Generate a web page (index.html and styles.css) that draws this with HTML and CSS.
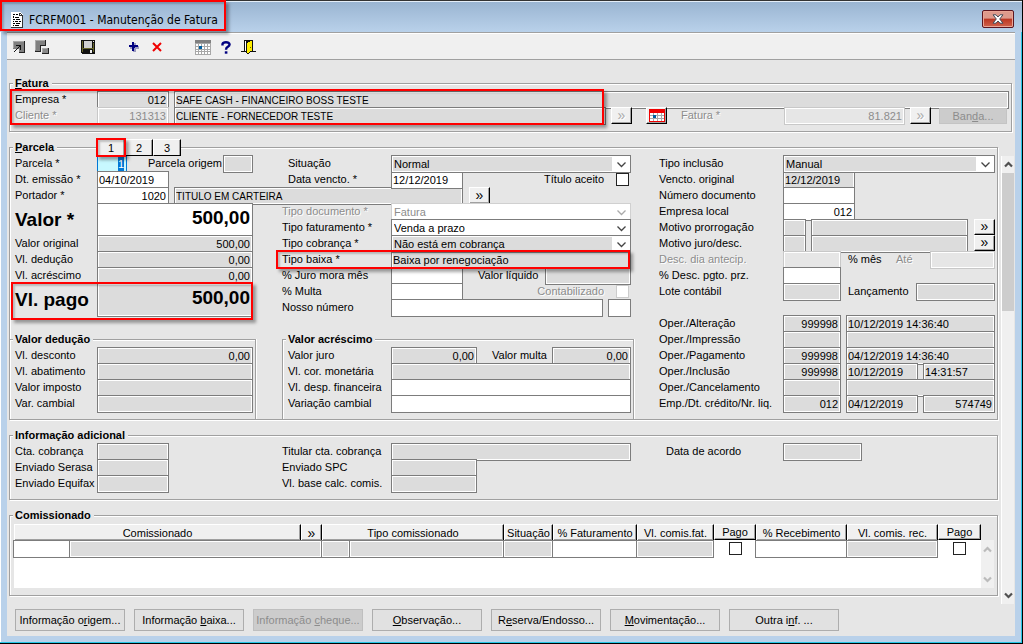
FILE: index.html
```html
<!DOCTYPE html>
<html lang="pt-BR">
<head>
<meta charset="utf-8">
<title>FCRFM001 - Manutenção de Fatura</title>
<link rel="stylesheet" href="styles.css">
</head>
<body>
<svg class="defs" aria-hidden="true">
  <symbol id="down" viewBox="0 0 9 6"><path d="M.5 .5 4.500 4.500 8.500 .5" fill="none" stroke="currentColor" stroke-width="1.300"/></symbol>
  <symbol id="thick" viewBox="0 0 9 7"><path d="M1 1.500 4.500 5 8 1.500" fill="none" stroke="currentColor" stroke-width="2.200"/></symbol>
</svg>
<div class="window">
  <header class="titlebar">
    <svg class="doc" viewBox="0 0 12 16" shape-rendering="crispEdges"><path d="M0 0h9l3 3v13H0z" fill="#fff"/><path d="M11 3h1v13h-1zM0 15h12v1H0zM9 1h1v1H9zM10 2h1v1h-1zM8 1h1v3H8zM8 3h3v1H8z" fill="#333"/><path d="M2 2h2v1H2zM5 2h2v1H5zM2 4h1v2H2zM4 5h4v1H4zM2 7h2v1H2zM5 7h4v1H5zM2 9h1v1H2zM4 9h3v1H4zM8 9h2v1H8zM2 11h2v1H2zM5 11h4v1H5zM2 13h1v1H2zM4 13h4v1H4z" fill="#000"/></svg>
    <h1>FCRFM001 - Manutenção de Fatura</h1>
    <button class="close" type="button" aria-label="Fechar"><svg viewBox="0 0 12 10"><path d="M1 .8h3l2 2.200 2-2.200h3L7.700 5 11 9.200H8L6 7 4 9.200H1L4.300 5z" fill="#fff" stroke="#444b58"/></svg></button>
    <span class="mark mark-title"></span>
  </header>
  <div class="body">
    <nav class="toolbar" aria-label="Ferramentas">
      <button type="button" aria-label="Confirmar"><svg width="12" height="12" viewBox="0 0 12 12" shape-rendering="crispEdges"><path d="M0 0h11v11H6V8H0z" fill="#808080"/><path d="M0 0h11v1H1v6H0z" fill="#a8a8a8"/><path d="M11 0h1v12H6v-1h5z" fill="#222"/><path d="M3 4h5v5H7V6H6v1H5v1H4v1H3v1H2v1H1v-1h1V9h1V8h1V7h1V6h1V5H3z" fill="#111"/></svg></button>
      <button type="button" aria-label="Navegar"><svg width="14" height="14" viewBox="0 0 14 14" shape-rendering="crispEdges"><path d="M0 0h10v5H5v6H0z" fill="#808080"/><path d="M10 0h1v6H6v6H0v-1h5V5h5zM13 8h1v6H7v-1h6z" fill="#222"/><path d="M7 8h6v5H7z" fill="#888"/><path d="M0 0h10v1H1v9H0zM7 8h5v1H8v3H7z" fill="#aaa"/></svg></button>
      <span></span>
      <button type="button" aria-label="Salvar"><svg width="14" height="14" viewBox="0 0 14 14" shape-rendering="crispEdges"><path d="M0 0h14v14H1L0 13z" fill="#111"/><path d="M1 1h1v11H1zM12 3h1v9h-1z" fill="#66662a"/><path d="M3 1h8v7H3z" fill="#d0d0d0"/><path d="M12 1h1v1h-1zM9 10h2v3H9z" fill="#eee"/><path d="M2 8h10v1H2z" fill="#66662a"/></svg></button>
      <span></span>
      <button type="button" aria-label="Incluir"><svg width="10" height="10" viewBox="0 0 10 10" shape-rendering="crispEdges"><path d="M4 1h3v3h3v3H7v3H4V7H1V4h3z" fill="#9c9cc0"/><path d="M3 0h2v3h4v2H5v4H3V5H0V3h3z" fill="#000080"/><path d="M3 3h3v3H3z" fill="#000080"/></svg></button>
      <button type="button" aria-label="Excluir"><svg width="10" height="10" viewBox="0 0 10 10"><path d="M1 1 9 9M9 1 1 9" stroke="#f00000" stroke-width="2"/></svg></button>
      <span></span>
      <button type="button" aria-label="Calendário"><svg width="16" height="15" viewBox="0 0 16 15" shape-rendering="crispEdges"><path d="M0 0h16v15H0z" fill="#a8a8a8"/><path d="M0 0h16v3H0z" fill="#808080"/><path d="M1 4h2v2H1zM4 4h2v2H4zM7 4h2v2H7zM10 4h2v2h-2zM13 4h2v2h-2zM1 7h2v2H1zM4 7h2v2H4zM7 7h2v2H7zM10 7h2v2h-2zM13 7h2v2h-2zM1 10h2v1H1zM4 10h2v1H4zM7 10h2v1H7zM10 10h2v1h-2zM13 10h2v1h-2zM1 12h2v2H1zM4 12h2v2H4zM7 12h2v2H7zM10 12h2v2h-2zM13 12h2v2h-2z" fill="#fff"/><path d="M4 6h3v3H4z" fill="#0060a0"/></svg></button>
      <button type="button" aria-label="Ajuda"><svg width="10" height="13" viewBox="0 0 10 13"><path d="M1.500 4.500V3Q2 1.200 5 1.200T8.600 3.300Q8.600 4.800 7 5.600 5 6.500 5 8.700" fill="none" stroke="#000080" stroke-width="2.400"/><path d="M3.800 10.300h2.600v2.400H3.800z" fill="#000080"/></svg></button>
      <button type="button" aria-label="Sair"><svg width="15" height="14" viewBox="0 0 15 14" shape-rendering="crispEdges"><path d="M3 0h9v11h3v1H9v1H8v1H6v-1H5v-1H0v-1h3z" fill="#111"/><path d="M4 1h1v10H4z" fill="#fff"/><path d="M6 3h1V2h2V1h2v10H9v1H8v1H6z" fill="#ffee00"/><path d="M9 7h1v1H9z" fill="#666600"/></svg></button>
    </nav>

    <main class="content">
      <div class="box header-box">
        <fieldset>
          <legend><u>F</u>atura</legend>
          <div class="rows lead">
            <div class="row"><label class="l1" for="empresa">Empresa *</label><input id="empresa" class="f w72 num ro" readonly value="012"><input class="f grow ro next caps" readonly aria-label="Nome da empresa" value="SAFE CASH - FINANCEIRO BOSS TESTE"></div>
            <div class="row"><label class="l1 off" for="cliente">Cliente *</label><input id="cliente" class="f w72 num off-f" disabled value="131313"><input class="f grow ro next caps" readonly aria-label="Nome do cliente" value="CLIENTE - FORNECEDOR TESTE"><button class="go next" type="button" disabled aria-label="Buscar cliente">»</button><button class="go cal" type="button" aria-label="Calendário da fatura"><svg width="16" height="13" viewBox="0 0 16 13" shape-rendering="crispEdges"><path d="M0 0h16v13H0z" fill="#f00000"/><path d="M1 4h14v8H1z" fill="#fff"/><path d="M4 4h1v8H4zM8 4h1v8H8zM12 4h1v8h-1zM1 6h14v1H1zM1 9h14v1H1z" fill="#a8a8a8"/><path d="M4 6h3v3H4z" fill="#0060a0"/></svg></button><label class="fat-label off" for="fatura">Fatura *</label><input id="fatura" class="f w121 num off-f" disabled value="81.821"><button class="go next" type="button" disabled aria-label="Buscar fatura">»</button><button class="banda" type="button" disabled>Ban<u>d</u>a...</button></div>
          </div>
        </fieldset>
        <span class="mark mark-empresa"></span>
      </div>

      <div class="scroller">
        <div class="panes">
          <div class="box">
            <fieldset>
              <legend><u>P</u>arcela</legend>
              <div class="cols">
                <div class="rows">
                  <div class="lead">
                    <div class="row"><label class="l1" for="parcela">Parcela *</label><input id="parcela" class="f w30 num current" value="1"><label class="origem" for="origem">Parcela origem</label><input id="origem" class="f w30 ro" readonly></div>
                    <div class="row"><label class="l1" for="emissao">Dt. emissão *</label><input id="emissao" class="f w72" value="04/10/2019"></div>
                    <div class="row"><label class="l1" for="portador">Portador *</label><input id="portador" class="f w72 num" value="1020"><input class="f w289 ro next caps" readonly aria-label="Nome do portador" value="TITULO EM CARTEIRA"></div>
                    <div class="row big"><label class="l1" for="valor">Valor *</label><input id="valor" class="f w156 num" value="500,00"></div>
                    <div class="row"><label class="l1" for="vorig">Valor original</label><input id="vorig" class="f w156 num ro" readonly value="500,00"></div>
                    <div class="row"><label class="l1" for="vded">Vl. dedução</label><input id="vded" class="f w156 num ro" readonly value="0,00"></div>
                    <div class="row"><label class="l1" for="vacr">Vl. acréscimo</label><input id="vacr" class="f w156 num ro" readonly value="0,00"></div>
                    <div class="row big"><label class="l1" for="vpago">Vl. pago</label><input id="vpago" class="f w156 num ro" readonly value="500,00"></div>
                  </div>
                  <fieldset class="sub sub-a">
                    <legend>Valor dedução</legend>
                    <div class="lead">
                      <div class="row"><label class="l1" for="vdesc">Vl. desconto</label><input id="vdesc" class="f w156 num ro" readonly value="0,00"></div>
                      <div class="row"><label class="l1" for="vabat">Vl. abatimento</label><input id="vabat" class="f w156 ro" readonly></div>
                      <div class="row"><label class="l1" for="vimp">Valor imposto</label><input id="vimp" class="f w156 ro" readonly></div>
                      <div class="row"><label class="l1" for="vcamb">Var. cambial</label><input id="vcamb" class="f w156 ro" readonly></div>
                    </div>
                  </fieldset>
                </div>

                <div class="rows">
                  <div class="row"><label class="l2 ind" for="situacao">Situação</label><span class="combo ro-c"><select id="situacao"><option>Normal</option></select><svg><use href="#down"/></svg></span></div>
                  <div class="row mid"><label class="l2 ind" for="vencto">Data vencto. *</label><input id="vencto" class="f w72" value="12/12/2019"><label class="tick"><span>Título aceito</span><input type="checkbox"></label></div>
                  <div class="row"><button class="go portador-go" type="button" aria-label="Buscar portador">»</button></div>
                  <div class="row"><label class="l2 off" for="tdoc">Tipo documento *</label><span class="combo off-c"><select id="tdoc" disabled><option>Fatura</option></select><svg><use href="#down"/></svg></span></div>
                  <div class="row"><label class="l2" for="tfat">Tipo faturamento *</label><span class="combo"><select id="tfat"><option>Venda a prazo</option></select><svg><use href="#down"/></svg></span></div>
                  <div class="row"><label class="l2" for="tcob">Tipo cobrança *</label><span class="combo ro-c"><select id="tcob"><option>Não está em cobrança</option></select><svg><use href="#down"/></svg></span></div>
                  <div class="row"><label class="l2" for="tbaixa">Tipo baixa *</label><input id="tbaixa" class="f w240 ro" readonly value="Baixa por renegociação"></div>
                  <div class="row mid"><label class="l2" for="juro">% Juro mora mês</label><input id="juro" class="f w72"><label class="liq" for="liq">Valor líquido</label><input id="liq" class="f w86 ro" readonly></div>
                  <div class="row mid"><label class="l2" for="multa">% Multa</label><input id="multa" class="f w72"><label class="tick off"><span>Contabilizado</span><input type="checkbox" disabled></label></div>
                  <div class="row mid"><label class="l2" for="nosso">Nosso número</label><input id="nosso" class="f grow"><input class="f w23 next" aria-label="Dígito do nosso número"></div>
                  <fieldset class="sub sub-b">
                    <legend>Valor acréscimo</legend>
                    <div class="row"><label class="l3" for="vjuro">Valor juro</label><input id="vjuro" class="f w86 num ro" readonly value="0,00"><label class="vmulta" for="vmulta">Valor multa</label><input id="vmulta" class="f w79 num ro" readonly value="0,00"></div>
                    <div class="row"><label class="l3" for="cor">Vl. cor. monetária</label><input id="cor" class="f w240 ro" readonly></div>
                    <div class="row"><label class="l3" for="desp">Vl. desp. financeira</label><input id="desp" class="f w240"></div>
                    <div class="row"><label class="l3" for="vari">Variação cambial</label><input id="vari" class="f w240"></div>
                  </fieldset>
                </div>

                <div class="rows third">
                  <div class="row"><label class="l4" for="tinc">Tipo inclusão</label><span class="combo grow ro-c"><select id="tinc"><option>Manual</option></select><svg><use href="#down"/></svg></span></div>
                  <div class="row"><label class="l4" for="vorg">Vencto. original</label><input id="vorg" class="f w72 ro" readonly value="12/12/2019"></div>
                  <div class="row"><label class="l4" for="ndoc">Número documento</label><input id="ndoc" class="f w72"></div>
                  <div class="row"><label class="l4" for="eloc">Empresa local</label><input id="eloc" class="f w72 num" value="012"></div>
                  <div class="row"><label class="l4" for="mpro">Motivo prorrogação</label><input id="mpro" class="f w23 ro" readonly><input class="f grow ro next" readonly aria-label="Descrição da prorrogação"><button class="go motivo" type="button" aria-label="Buscar prorrogação">»</button></div>
                  <div class="row"><label class="l4" for="mjur">Motivo juro/desc.</label><input id="mjur" class="f w23 ro" readonly><input class="f grow ro next" readonly aria-label="Descrição do juro"><button class="go motivo" type="button" aria-label="Buscar juro">»</button></div>
                  <div class="row"><label class="l4 off" for="ddia">Desc. dia antecip.</label><input id="ddia" class="f w58 off-f" disabled><span class="after">% mês</span><label class="ate off" for="ate">Até</label><input id="ate" class="f w65 off-f" disabled></div>
                  <div class="row"><label class="l4" for="dpg">% Desc. pgto. prz.</label><input id="dpg" class="f w58"></div>
                  <div class="row"><label class="l4" for="lote">Lote contábil</label><input id="lote" class="f w58 ro" readonly><label class="after" for="lanc">Lançamento</label><input id="lanc" class="f w79 ro end" readonly></div>
                  <div class="row"></div>
                  <div class="row"><label class="l4" for="o1">Oper./Alteração</label><input id="o1" class="f w58 num ro" readonly value="999998"><input class="f grow ro next" readonly aria-label="Data da alteração" value="10/12/2019 14:36:40"></div>
                  <div class="row"><label class="l4" for="o2">Oper./Impressão</label><input id="o2" class="f w58 ro" readonly><input class="f grow ro next" readonly aria-label="Data da impressão"></div>
                  <div class="row"><label class="l4" for="o3">Oper./Pagamento</label><input id="o3" class="f w58 num ro" readonly value="999998"><input class="f grow ro next" readonly aria-label="Data do pagamento" value="04/12/2019 14:36:40"></div>
                  <div class="row"><label class="l4" for="o4">Oper./Inclusão</label><input id="o4" class="f w58 num ro" readonly value="999998"><input class="f grow ro next" readonly aria-label="Data da inclusão" value="10/12/2019"><input class="f grow ro next" readonly aria-label="Hora da inclusão" value="14:31:57"></div>
                  <div class="row"><label class="l4" for="o5">Oper./Cancelamento</label><input id="o5" class="f w58 ro" readonly><input class="f grow ro next" readonly aria-label="Data do cancelamento"></div>
                  <div class="row"><label class="l4" for="o6">Emp./Dt. crédito/Nr. liq.</label><input id="o6" class="f w58 num ro" readonly value="012"><input class="f grow ro next" readonly aria-label="Data do crédito" value="04/12/2019"><input class="f grow num ro next" readonly aria-label="Número da liquidação" value="574749"></div>
                </div>
              </div>
            </fieldset>
            <div class="tabs"><button type="button">1</button><button type="button">2</button><button type="button">3</button></div>
            <span class="mark mark-tab"></span><span class="mark mark-pago"></span><span class="mark mark-baixa"></span>
          </div>

          <div class="box">
            <fieldset>
              <legend>Informação adicional</legend>
              <div class="cols">
                <div class="lead">
                  <div class="row"><label class="l1" for="cta">Cta. cobrança</label><input id="cta" class="f w72 ro" readonly></div>
                  <div class="row"><label class="l1" for="ser">Enviado Serasa</label><input id="ser" class="f w72 ro" readonly></div>
                  <div class="row"><label class="l1" for="equ">Enviado Equifax</label><input id="equ" class="f w72 ro" readonly></div>
                </div>
                <div>
                  <div class="row"><label class="l2" for="tit">Titular cta. cobrança</label><input id="tit" class="f w240 ro" readonly></div>
                  <div class="row"><label class="l2" for="spc">Enviado SPC</label><input id="spc" class="f w86 ro" readonly></div>
                  <div class="row"><label class="l2" for="bas">Vl. base calc. comis.</label><input id="bas" class="f w86 ro" readonly></div>
                </div>
                <div><div class="row"><label class="l4 ind" for="aco">Data de acordo</label><input id="aco" class="f w79 ro" readonly></div></div>
              </div>
            </fieldset>
          </div>

          <div class="box">
            <fieldset class="last">
              <legend>Comissionado</legend>
              <div class="gridbox">
                <div class="sheet">
                  <table>
                    <colgroup><col class="w56"><col class="w231"><col class="w21"><col class="w28"><col><col class="w49"><col class="w84"><col class="w77"><col class="w42"><col class="w91"><col class="w91"><col class="w43"></colgroup>
                    <thead><tr><th colspan="2">Comissionado</th><th class="arrows">»</th><th colspan="2">Tipo comissionado</th><th>Situação</th><th>% Faturamento</th><th>Vl. comis.fat.</th><th class="shadow">Pago</th><th>% Recebimento</th><th>Vl. comis. rec.</th><th class="shadow">Pago</th></tr></thead>
                    <tbody><tr>
                      <td><input class="f" aria-label="Código do comissionado"></td>
                      <td colspan="2"><input class="f ro" readonly aria-label="Nome do comissionado"></td>
                      <td><input class="f ro" readonly aria-label="Código do tipo"></td>
                      <td><input class="f ro" readonly aria-label="Tipo comissionado"></td>
                      <td><input class="f ro" readonly aria-label="Situação"></td>
                      <td><input class="f" aria-label="% Faturamento"></td>
                      <td><input class="f ro" readonly aria-label="Vl. comis. fat."></td>
                      <td class="check"><input type="checkbox" aria-label="Faturamento pago"></td>
                      <td><input class="f" aria-label="% Recebimento"></td>
                      <td><input class="f ro" readonly aria-label="Vl. comis. rec."></td>
                      <td class="check"><input type="checkbox" aria-label="Recebimento pago"></td>
                    </tr></tbody>
                  </table>
                </div>
                <div class="bar small"><svg class="up"><use href="#thick"/></svg><svg><use href="#thick"/></svg></div>
              </div>
            </fieldset>
          </div>
        </div>
        <div class="bar main-bar"><svg class="up"><use href="#thick"/></svg><span class="thumb"></span><svg><use href="#thick"/></svg></div>
      </div>
      <footer class="actions">
        <button type="button">Informação o<u>r</u>igem...</button>
        <button type="button">Informação <u>b</u>aixa...</button>
        <button type="button" disabled>Informação <u>c</u>heque...</button>
        <button type="button"><u>O</u>bservação...</button>
        <button type="button">R<u>e</u>serva/Endosso...</button>
        <button type="button"><u>M</u>ovimentação...</button>
        <button type="button">Outra i<u>n</u>f. ...</button>
      </footer>
    </main>
  </div>
</div>
</body>
</html>
```
FILE: styles.css
```css
* { box-sizing: border-box; }
body { margin: 0; background: #b9d1ea; }
body, input, select, button { font-family: "Liberation Sans", Arial, sans-serif; font-size: 11px; color: #000; }
.defs { position: absolute; width: 0; height: 0; }
button, input, select, fieldset { margin: 0; padding: 0; border-radius: 0; }

.window { display: flex; flex-direction: column; min-height: 100vh; background: #b9d1ea; border-right: 1px solid #000; border-bottom: 1px solid #000; box-shadow: inset -1px -1px 0 #26c6e6, inset 1px 0 0 #fff; }
.titlebar { position: relative; display: flex; align-items: center; height: 32px; padding: 6px 8px 0 11px; gap: 6px; background: linear-gradient(#99b4d1, #b9d1ea); border-top: 1px solid #333; box-shadow: inset 0 1px 0 #e4eef8; }
.titlebar h1 { flex: 1; margin: 0; font: 12px/16px "DejaVu Sans Condensed", "DejaVu Sans", sans-serif; }
.doc { width: 12px; height: 16px; }
.close { display: flex; align-items: center; justify-content: center; width: 32px; height: 18px; margin-bottom: 2px; border: 1px solid #5c1620; border-radius: 2px; box-shadow: inset 0 0 0 1px #e9a595; background: linear-gradient(#dd9a8c 0 45%, #bb3622 50%, #d0624c); }
.close svg { width: 12px; height: 10px; }

.body { flex: 1; display: flex; flex-direction: column; margin: 0 7px 7px; background: #e6e6e6; }
.toolbar { display: flex; height: 28px; background: #f0f0f0; border-top: 1px solid #a0a0a0; border-bottom: 1px solid #a0a0a0; box-shadow: inset 0 1px 0 #fff; }
.toolbar button, .toolbar span { width: 23px; }
.toolbar button { display: flex; align-items: center; justify-content: center; padding-top: 2px; border: 0; background: none; }
.content { flex: 1; display: flex; flex-direction: column; padding: 15px 0 5px 2px; }

.box { position: relative; }
fieldset { min-width: 0; border: 1px solid #a0a0a0; box-shadow: 1px 1px 0 #fff, inset 1px 1px 0 #fff; padding-bottom: 8px; }
legend { margin-left: 3px; padding: 0 3px 0 2px; height: 16px; line-height: 16px; font-weight: bold; background: #e6e6e6; }
.header-box { margin: 0 3px 7px 0; }
.header-box .rows { padding-right: 2px; }
.scroller { display: flex; flex: 1; gap: 3px; }
.panes { flex: 1; min-width: 0; display: flex; flex-direction: column; gap: 7px; padding-bottom: 8px; }
.cols { display: grid; grid-template-columns: 272px 377px minmax(0, 1fr); }
.lead { padding-left: 5px; }
.third { padding-right: 2px; }

.row { display: flex; height: 16px; line-height: 16px; white-space: nowrap; }
.row > * { flex-shrink: 0; }
.row.mid { width: 349px; }
.row.big { height: 32px; font-weight: bold; font-size: 19px; line-height: 34px; }
.l1 { width: 82px; }
.l2 { width: 109px; }
.l3 { width: 103px; }
.l4 { width: 124px; }
.l2.ind { padding-left: 6px; }
.l4.ind { padding-left: 7px; }
.off { color: #8c8c8c; text-shadow: 1px 1px 0 #fff; }

.f { height: 18px; padding: 0 2px 0 1px; border: 1px solid #7c7c7c; background: #fff; outline: 0; min-width: 0; }
.f.ro { background: #dcdcdc; box-shadow: inset 0 0 0 1px #fff; }
.f.off-f { background: #e6e6e6; color: #8c8c8c; border-color: #c8c8c8; box-shadow: inset 0 0 0 1px #fff; }
.f.num { text-align: right; }
.f.caps { font-size: 10px; }
.row > .grow { flex: 1 1 0; width: 0; min-width: 0; }
.next { margin-left: 5px; }
.big .f { height: 34px; font-size: 19px; font-weight: bold; padding: 0 2px 5px; }
.f.current { color: #fff; border-color: #7c7c7c #0078d7 #7c7c7c #0078d7; background: linear-gradient(#0078d7, #0078d7) 20px 0 / 6px 100% no-repeat #c8f8ff; }
.w21 { width: 21px; } .w23 { width: 23px; } .w28 { width: 28px; } .w30 { width: 30px; }
.w42 { width: 42px; } .w43 { width: 43px; } .w49 { width: 49px; } .w56 { width: 56px; }
.w58 { width: 58px; } .w65 { width: 65px; } .w72 { width: 72px; } .w77 { width: 77px; }
.w79 { width: 79px; } .w84 { width: 84px; } .w86 { width: 86px; } .w91 { width: 91px; }
.w121 { width: 121px; } .w156 { width: 156px; } .w231 { width: 231px; } .w240 { width: 240px; } .w289 { width: 289px; }

.combo { position: relative; width: 240px; height: 18px; }
.combo select { display: block; width: 100%; height: 18px; padding: 0 18px 0 2px; appearance: none; border: 1px solid #7c7c7c; background: #fff; }
.combo.ro-c select { background: linear-gradient(#fff, #fff) right / 18px 100% no-repeat #dcdcdc; box-shadow: inset 0 0 0 1px #fff; }
.combo.off-c select { border-color: #d0d0d0; color: #8c8c8c; opacity: 1; }
.combo svg { position: absolute; right: 5px; top: 7px; width: 9px; height: 6px; color: #444; pointer-events: none; }
.off-c svg { color: #aaa; }

.go { width: 21px; height: 17px; font-size: 14px; line-height: 10px; padding-bottom: 2px; border: 1px solid #fff; border-right-color: #000; border-bottom-color: #000; box-shadow: inset -1px -1px 0 #a0a0a0; background: #f0f0f0; }
.go:disabled { color: #aaa; text-shadow: 1px 1px 0 #fff; }
.cal { margin-left: 14px; padding: 0; display: flex; align-items: center; justify-content: center; }
.fat-label { width: 117px; padding-left: 14px; }
.banda { width: 68px; height: 16px; margin: 1px 2px 0 8px; border: 1px solid #c4c4c4; background: #cccccc; color: #8c8c8c; }
.origem { margin-left: 21px; width: 75px; }
.portador-go { margin-left: 187px; }
.liq { width: 82px; padding-left: 15px; }
.tick { display: flex; margin-left: auto; padding-right: 2px; gap: 12px; }
input[type="checkbox"] { appearance: none; width: 13px; height: 13px; margin: 2px 0 0; border: 1px solid #222; background: #fff; }
input[type="checkbox"]:disabled { border-color: #ccc; }
.vmulta { width: 75px; padding-left: 15px; }
.motivo { margin: 0 0 0 6px; height: 16px; }
.after { margin-left: 7px; }
.ate { margin-left: auto; width: 34px; }
.end { margin-left: auto; }

.sub { margin-top: 16px; border-bottom: 0; box-shadow: inset 0 1px 0 #fff, 1px 0 0 #fff; margin-bottom: -8px; }
.sub-a { width: 246px; border-left: 0; }
.sub-b { width: 352px; padding-left: 5px; box-shadow: inset 1px 1px 0 #fff, 1px 0 0 #fff; }
.sub-b legend { margin-left: -2px; }

.tabs { position: absolute; left: 88px; top: 0; display: flex; }
.tabs button { width: 28px; height: 17px; border: 1px solid #fff; border-right-color: #000; border-bottom-color: #000; box-shadow: inset -1px 0 0 #a0a0a0; background: #f0f0f0; }

.mark { position: absolute; border: 2px solid #f00; box-shadow: 3px 3px 3px rgba(0, 0, 0, .35), inset 2px 2px 2px rgba(0, 0, 0, .2); pointer-events: none; }
.mark-title { left: 0; top: -1px; width: 226px; height: 31px; }
.mark-empresa { left: 1px; top: 14px; width: 594px; height: 36px; }
.mark-tab { left: 87px; top: -1px; width: 30px; height: 19px; }
.mark-pago { left: 2px; top: 143px; width: 242px; height: 38px; }
.mark-baixa { left: 267px; top: 111px; width: 354px; height: 19px; }

.last { padding-bottom: 7px; }
.gridbox { display: flex; padding: 1px 3px 0 4px; }
.sheet { flex: 1; min-width: 0; height: 64px; background: #fff; }
table { width: 100%; table-layout: fixed; border-collapse: separate; border-spacing: 0; }
th, td { padding: 0; }
th { height: 15px; font-weight: normal; line-height: 14px; white-space: nowrap; background: #f0f0f0; border-top: 1px solid #fff; border-left: 1px solid #fff; border-right: 1px solid #000; box-shadow: inset -1px -1px 0 #a0a0a0; }
th.arrows { font-size: 14px; line-height: 12px; }
th.shadow { border-bottom: 1px solid #000; }
td { height: 18px; vertical-align: top; }
td .f { display: block; width: calc(100% + 1px); margin-left: -1px; }
.check { text-align: center; line-height: 14px; }

.bar { display: flex; flex-direction: column; align-items: center; justify-content: space-between; width: 13px; background: #f0f0f0; }
.bar svg { width: 9px; height: 7px; color: #505050; }
.bar .up { transform: scaleY(-1); }
.small { margin-top: 16px; padding: 6px 0 5px; }
.small svg { color: #bbb; }
.main-bar { margin: 17px 1px 0 0; width: 13px; padding: 5px 0; border-left: 1px solid #fff; }
.thumb { width: 12px; height: 138px; margin: 5px 0 auto; background: #cdcdcd; }

.actions { display: flex; flex-wrap: wrap; gap: 9px; padding: 5px 6px 0; }
.actions button { width: 110px; height: 22px; border: 1px solid #adadad; background: #e1e1e1; white-space: nowrap; }
.actions button:disabled { background: #ccc; border-color: #bfbfbf; color: #8c8c8c; }
```
